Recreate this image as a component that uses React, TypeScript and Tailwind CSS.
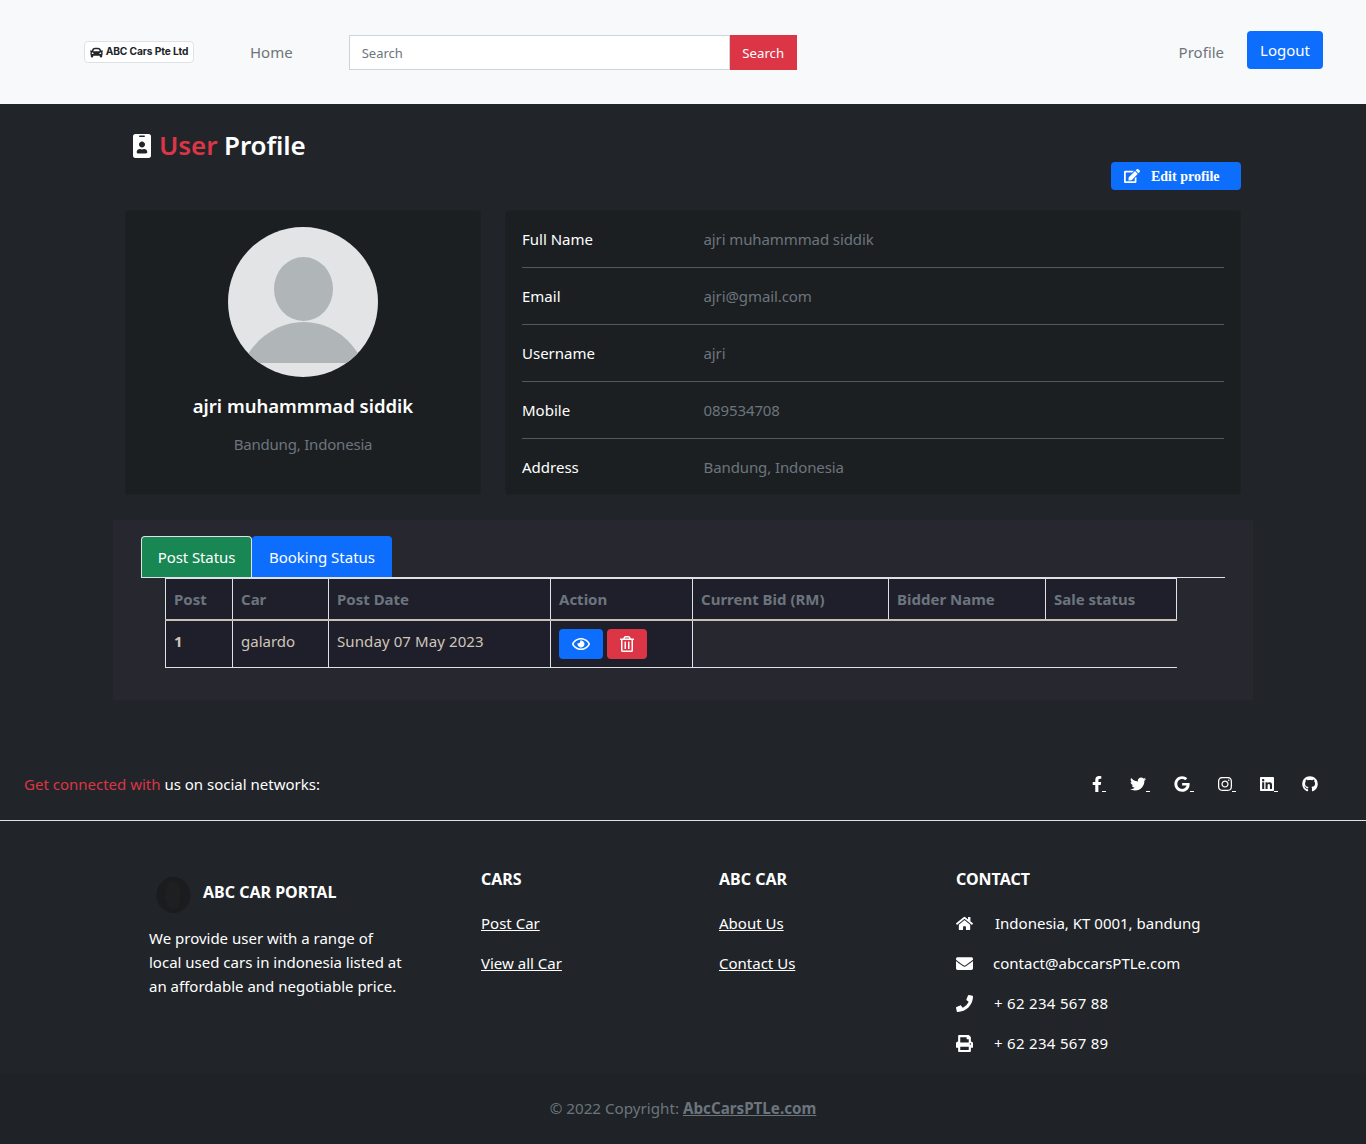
import { FaCar, FaIdBadge, FaEdit, FaRegEye, FaRegTrashAlt, FaFacebookF, FaTwitter, FaGoogle, FaInstagram, FaLinkedin, FaGithub, FaHome, FaEnvelope, FaPhone, FaPrint } from "react-icons/fa"

const details = [
    { label: "Full Name", value: "ajri muhammmad siddik" },
    { label: "Email", value: "ajri@gmail.com" },
    { label: "Username", value: "ajri" },
    { label: "Mobile", value: "089534708" },
    { label: "Address", value: "Bandung, Indonesia" },
]

const socials = [
    { Icon: FaFacebookF, size: "w-[10px]" },
    { Icon: FaTwitter, size: "w-[16px]" },
    { Icon: FaGoogle, size: "w-[16px]" },
    { Icon: FaInstagram, size: "w-[14px]" },
    { Icon: FaLinkedin, size: "w-[14px]" },
]

const Navbar = () => (
    <nav className="h-[104px] bg-[#f8f9fa] flex items-center pl-[84px] pr-[43px]">
        <div className="w-[110px] h-[22px] bg-white border border-[#dee2e6] rounded-[4px] flex items-center justify-center gap-[3px]">
            <FaCar className="text-[13px] text-[#212529]" />
            <span className="font-['Inter',sans-serif] font-bold text-[10.2px] tracking-[-0.1px] text-[#212529] whitespace-nowrap">ABC Cars Pte Ltd</span>
        </div>
        <a className="ml-[56px] text-[15px] text-[#6f7479]">Home</a>
        <div className="ml-[56px] flex h-[35px]">
            <div className="w-[381px] bg-white border border-[#ced4da] flex items-center pl-[12px] pt-[3px] text-[13px] text-[#6c757d]">Search</div>
            <button className="w-[67px] bg-[#dc3545] pt-[3px] text-white text-[13.2px]">Search</button>
        </div>
        <a className="ml-auto text-[15px] text-[#6f7479]">Profile</a>
        <button className="ml-[23px] w-[76px] h-[38px] mb-[4px] bg-[#0d6efd] text-white text-[15px] rounded-[4px]">Logout</button>
    </nav>
)

const ProfileCards = () => (
    <div className="grid grid-cols-[356px_736px] gap-[24px]">
        <div className="h-[285px] bg-[#1c1f22] border border-[#1d2024] rounded-[4px] flex flex-col items-center pt-[16px]">
            <svg width="150" height="150" viewBox="0 0 150 150" className="rounded-full">
                <rect width="150" height="150" fill="#e2e4e6" />
                <ellipse cx="75.5" cy="62" rx="29.5" ry="32" fill="#b0b5b8" />
                <path d="M15 136 C28 109 52 95 75.5 95 C99 95 123 109 135 136 Z" fill="#b0b5b8" />
            </svg>
            <h5 className="mt-[15px] text-[18.5px] font-semibold text-white">ajri muhammmad siddik</h5>
            <p className="mt-[13px] text-[15px] tracking-[-0.2px] text-[#6c757d]">Bandung, Indonesia</p>
        </div>
        <div className="h-[285px] bg-[#1c1f22] border border-[#1d2024] rounded-[4px] px-[16px] flex flex-col">
            {details.map((d, i) => (
                <div key={d.label} className={`flex items-center shrink-0 ${i < 4 ? "h-[57px] border-b border-[#54585c]" : "h-[55px] pt-[1px]"}`}>
                    <span className="w-[181.5px] text-[15px] text-white">{d.label}</span>
                    <span className="text-[15px] tracking-[-0.1px] text-[#6c757d]">{d.value}</span>
                </div>
            ))}
        </div>
    </div>
)

const StatusTabs = () => (
    <section className="w-[1140px] h-[180px] mx-auto mt-[25px] bg-[#26272f] pt-[16px] pl-[28px] pr-[28px]">
        <div className="flex border-b border-[#dee2e6] h-[42px]">
            <button className="w-[111px] bg-[#198754] border border-[#dee2e6] border-b-0 rounded-t-[4px] text-white text-[15px] tracking-[-0.1px]">Post Status</button>
            <button className="w-[140px] bg-[#0d6efd] border border-[#0d6efd] border-b-0 rounded-t-[4px] text-white text-[15px]">Booking Status</button>
        </div>
        <table className="ml-[24px] w-[1011px] table-fixed border-collapse text-[15px]">
            <colgroup>
                <col className="w-[67px]" />
                <col className="w-[96px]" />
                <col className="w-[222px]" />
                <col className="w-[142px]" />
                <col className="w-[196px]" />
                <col className="w-[157px]" />
                <col className="w-[131px]" />
            </colgroup>
            <thead>
                <tr className="h-[41px] bg-[#1f1f2b] text-left text-[#6c757d] font-bold">
                    {["Post", "Car", "Post Date", "Action", "Current Bid (RM)", "Bidder Name", "Sale status"].map((h) => (
                        <th key={h} className="border border-[#dee2e6] border-b-2 border-b-[#c9bfb3] px-[8px] font-bold whitespace-nowrap">{h}</th>
                    ))}
                </tr>
            </thead>
            <tbody>
                <tr className="h-[48px] text-[#cfc6b8] border-b border-[#dee2e6]">
                    <td className="bg-[#1f1f2b] border-x border-[#dee2e6] px-[8px] font-bold align-top pt-[9px]">1</td>
                    <td className="bg-[#1f1f2b] border-x border-[#dee2e6] px-[8px] align-top pt-[9px]">galardo</td>
                    <td className="bg-[#1f1f2b] border-x border-[#dee2e6] px-[8px] tracking-[0.1px] align-top pt-[9px]">Sunday 07 May 2023</td>
                    <td className="bg-[#1f1f2b] border-x border-[#dee2e6] px-[8px]">
                        <div className="flex gap-[4px]">
                            <button className="w-[44px] h-[30px] bg-[#0d6efd] rounded-[4px] flex items-center justify-center text-white text-[18px]"><FaRegEye /></button>
                            <button className="w-[40px] h-[30px] bg-[#dc3545] rounded-[4px] flex items-center justify-center text-white text-[16px]"><FaRegTrashAlt /></button>
                        </div>
                    </td>
                    <td colSpan={3}></td>
                </tr>
            </tbody>
        </table>
    </section>
)

const Social = () => (
    <div className="h-[121px] border-b border-[#dee2e6] flex items-end pb-[26px] pl-[24px] pr-[48px] text-[15px]">
        <p className="mb-[-1px] text-white"><span className="text-[#dc3545]">Get connected with</span> us on social networks:</p>
        <div className="ml-auto mb-[2px] flex items-center gap-[24px] text-white text-[16px]">
            {socials.map(({ Icon, size }, i) => (
                <a key={i} className="flex items-end">
                    <Icon className={`${size} h-[16px]`} />
                    <span className="w-[4px] h-px bg-white" />
                </a>
            ))}
            <a><FaGithub /></a>
        </div>
    </div>
)

const FooterLink = ({ children }: { children: string }) => (
    <a className="block underline text-[15px] text-white h-[40px]">{children}</a>
)

const ContactRow = ({ icon, text, gap, wide }: { icon: React.ReactNode; text: string; gap: string; wide?: boolean }) => (
    <div className="flex items-center h-[40px] text-[15px] text-white">
        <span className={`text-[17px] ${gap}`}>{icon}</span>
        <span className={wide ? "tracking-[0.3px]" : ""}>{text}</span>
    </div>
)

const Footer = () => (
    <footer>
        <div className="h-[252px] pl-[149px] pt-[48px] flex text-white">
            <div className="w-[332px]">
                <div className="flex items-center h-[36px] mt-[8px] pl-[7px]">
                    <svg width="35" height="36" viewBox="0 0 35 36">
                        <ellipse cx="17.5" cy="18" rx="17" ry="18" fill="#1b1c1e" />
                        <ellipse cx="17" cy="18" rx="8" ry="14" fill="#1e1f21" />
                    </svg>
                    <h6 className="ml-[12px] mb-[6px] text-[16px] font-bold">ABC CAR PORTAL</h6>
                </div>
                <p className="mt-[13px] w-[258px] text-[15px] leading-[24px]">We provide user with a range of local used cars in indonesia listed at an affordable and negotiable price.</p>
            </div>
            <div className="w-[238px]">
                <h6 className="mt-[-2px] text-[16px] font-bold mb-[21px]">CARS</h6>
                <FooterLink>Post Car</FooterLink>
                <FooterLink>View all Car</FooterLink>
            </div>
            <div className="w-[237px]">
                <h6 className="mt-[-2px] text-[16px] font-bold mb-[21px]">ABC CAR</h6>
                <FooterLink>About Us</FooterLink>
                <FooterLink>Contact Us</FooterLink>
            </div>
            <div>
                <h6 className="mt-[-2px] text-[16px] font-bold mb-[12px]">CONTACT</h6>
                <ContactRow icon={<FaHome />} text="Indonesia, KT 0001, bandung" gap="mr-[22px]" />
                <ContactRow icon={<FaEnvelope />} text="contact@abccarsPTLe.com" gap="mr-[20px]" />
                <ContactRow icon={<FaPhone />} text="+ 62 234 567 88" gap="mr-[21px]" wide />
                <ContactRow icon={<FaPrint />} text="+ 62 234 567 89" gap="mr-[21px]" wide />
            </div>
        </div>
        <div className="h-[71px] bg-[#1f2327] flex items-center justify-center text-[15.2px] text-[#6c757d]">
            <span>© 2022 Copyright: <a className="font-bold underline">AbcCarsPTLe.com</a></span>
        </div>
    </footer>
)

export default function App() {
    return (
        <div className="min-h-[1144px] bg-[#212529] font-['Noto_Sans',sans-serif]">
            <Navbar />
            <main className="w-[1116px] mx-auto">
                <div className="h-[106px] flex justify-between items-end pb-[20px]">
                    <h2 className="self-start mt-[22px] ml-[5px] flex items-center gap-[5px] text-[26px] font-semibold tracking-[-0.1px] text-white">
                        <FaIdBadge className="text-white text-[24px]" />
                        <span><span className="text-[#dc3545]">User</span> Profile</span>
                    </h2>
                    <button className="w-[130px] h-[28px] bg-[#0d6efd] rounded-[4px] flex items-center pl-[13px] text-white font-['Liberation_Serif',serif] font-bold text-[14px]">
                        <FaEdit className="text-[16px] mr-[11px]" />
                        Edit profile
                    </button>
                </div>
                <ProfileCards />
            </main>
            <StatusTabs />
            <Social />
            <Footer />
        </div>
    )
}
